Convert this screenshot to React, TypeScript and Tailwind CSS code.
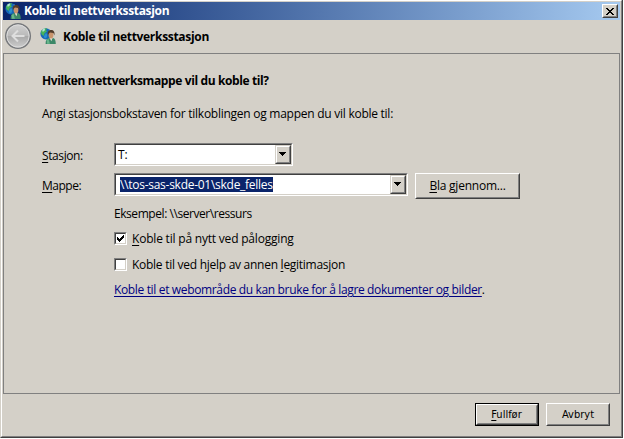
import type { ReactNode } from "react";

const sunken =
  "border border-t-[#808080] border-l-[#808080] border-r-white border-b-white";
const raised =
  "border border-t-white border-l-white border-r-[#404040] border-b-[#404040]";

function NetworkUserIcon() {
  return (
    <svg width="16" height="16" viewBox="0 0 16 16" className="block shrink-0">
      <circle cx="6" cy="5.8" r="5.6" fill="#1668b8" />
      <path d="M1 3.5C2.5 1 5 0 7 .3L6 2.2 7 3.4 4.6 5.2 3.8 8 1.4 6.3Z" fill="#46b45a" />
      <path d="M2.2 1.8C3 1 4.2.5 5.2.5L4.6 2.4 2.8 4Z" fill="#b4e4d2" />
      <path d="M5.6 5.2l2 .6-.8 3.4-2 1.6-1-2.4z" fill="#2a8ed0" />
      <path d="M8.6 1.2l2.2 1.4-1.2 1z" fill="#69c9ef" />
      <path d="M5.6 16c-.1-3.4 1.2-5.4 3.4-5.9l2.3.8 2-.8c1.7.6 2.5 2.7 2.5 5.9z" fill="#3c8868" />
      <path d="M6.8 12.3l1.6-1.8 1.5 5.3H7z" fill="#67b58b" />
      <path d="M9.6 10h2.8l-1 3.2z" fill="#e3ddd2" />
      <ellipse cx="11" cy="7" rx="2.4" ry="3.4" fill="#c9946c" />
      <path d="M7.9 7.4c-.8-3.4.6-5.4 3.2-5.4 2.5 0 4 2 3.3 5.4l-1-2.4-3.4-.6-1.3 1.3z" fill="#513b2b" />
    </svg>
  );
}

function BackButton() {
  return (
    <svg width="28" height="28" viewBox="0 0 28 28" className="block shrink-0">
      <defs>
        <linearGradient id="disc" x1="0" y1="0" x2="0" y2="1">
          <stop offset="0" stopColor="#d2d2d2" />
          <stop offset=".48" stopColor="#bababa" />
          <stop offset=".52" stopColor="#a9a9a9" />
          <stop offset="1" stopColor="#cfcfcf" />
        </linearGradient>
      </defs>
      <circle cx="14" cy="14" r="12.3" fill="url(#disc)" stroke="#77797c" strokeWidth="1.5" />
      <circle cx="14" cy="14" r="11.1" fill="none" stroke="#dcdcdc" />
      <path d="M20.5 14H9M14 8.5L8.5 14l5.5 5.5" fill="none" stroke="#dedede" strokeWidth="2" />
    </svg>
  );
}

function Combo({ className, children }: { className: string; children: ReactNode }) {
  return (
    <div className={`${sunken} h-[23px] shrink-0 ${className}`}>
      <div className="flex h-full items-stretch border border-t-[#404040] border-l-[#404040] border-r-[#d4d0c8] border-b-[#d4d0c8] bg-white">
        <div className="flex flex-1 items-center">{children}</div>
        <div className="w-4 border border-t-[#d4d0c8] border-l-[#d4d0c8] border-r-[#404040] border-b-[#404040]">
          <div className="flex h-full items-center justify-center border border-t-white border-l-white border-r-[#808080] border-b-[#808080] bg-[#d4d0c8] pr-px pb-px">
            <svg width="7" height="4" viewBox="0 0 7 4" shapeRendering="crispEdges">
              <path d="M0 0h7v1H0zM1 1h5v1H1zM2 2h3v1H2zM3 3h1v1H3z" />
            </svg>
          </div>
        </div>
      </div>
    </div>
  );
}

function PushButton({ className, children }: { className: string; children: ReactNode }) {
  return (
    <button className={`${raised} block shrink-0 ${className}`}>
      <span className="flex h-full items-center justify-center border border-t-[#d4d0c8] border-l-[#d4d0c8] border-r-[#808080] border-b-[#808080]">
        {children}
      </span>
    </button>
  );
}

function Check({ checked }: { checked?: boolean }) {
  return (
    <span className={`${sunken} block size-[13px] shrink-0`}>
      <span className="flex h-full items-center justify-center border border-t-[#404040] border-l-[#404040] border-r-[#d4d0c8] border-b-[#d4d0c8] bg-white">
        {checked && (
          <svg width="7" height="7" viewBox="0 0 7 7" shapeRendering="crispEdges">
            <path d="M0 2h1v1h1v1h1V3h1V2h1V1h1V0h1v3H6v1H5v1H4v1H3v1H2V6H1V5H0z" />
          </svg>
        )}
      </span>
    </span>
  );
}

const U = ({ children }: { children: ReactNode }) => (
  <span className="underline decoration-1 underline-offset-2">{children}</span>
);

export default function App() {
  return (
    <div className="h-[439px] w-[624px] overflow-hidden bg-white pr-px pb-px font-['Open_Sans','Noto_Sans',sans-serif] text-[12px] leading-4 whitespace-nowrap text-black">
      <div className="h-full border-r border-b border-l border-[#404040] border-l-[#d4d0c8]">
        <div className="flex h-full flex-col border border-t-white border-l-white border-r-[#808080] border-b-[#808080] bg-[#d4d0c8] pt-px pr-px pl-px">
          <div className="flex h-[18px] shrink-0 items-center bg-linear-to-r from-[#0a246a] to-[#a6caf0] pr-0.5 pl-0.5">
            <NetworkUserIcon />
            <span className="ml-[3px] font-bold tracking-[-0.34px] text-white">Koble til nettverksstasjon</span>
            <button className={`${raised} ml-auto block h-[14px] w-4 shrink-0 bg-[#d4d0c8]`}>
              <span className="flex h-full items-center justify-center border border-transparent border-r-[#808080] border-b-[#808080]">
                <svg width="8" height="7" viewBox="0 0 8 7" shapeRendering="crispEdges">
                  <path d="M0 0h2v1h1v1h2V1h1V0h2v1H7v1H6v1H5v1h1v1h1v1h1v1H6V6H5V5H3v1H2v1H0V6h1V5h1V4h1V3H2V2H1V1H0z" />
                </svg>
              </span>
            </button>
          </div>

          <div className="flex h-[33px] shrink-0 items-center pb-0.5 pl-px">
            <BackButton />
            <span className="ml-2">
              <NetworkUserIcon />
            </span>
            <span className="ml-[7px] pt-0.5 font-bold tracking-[-0.31px]">Koble til nettverksstasjon</span>
          </div>

          <main className="h-[341px] shrink-0 border border-[#808080] pl-[38px]">
            <h1 className="mt-[19px] font-bold tracking-[-0.38px]">Hvilken nettverksmappe vil du koble til?</h1>
            <p className="mt-[17px] tracking-[-0.26px]">
              Angi stasjonsbokstaven for tilkoblingen og mappen du vil koble til:
            </p>
            <div className="mt-[21px] flex h-[23px] items-center">
              <span className="w-[72px] pt-[3px] tracking-[-0.4px]"><U>S</U>tasjon:</span>
              <Combo className="w-[179px]">
                <span className="pl-0.5">T:</span>
              </Combo>
            </div>
            <div className="mt-[7px] flex h-[26px] items-start">
              <span className="w-[72px] pt-[5px] tracking-[-0.5px]"><U>M</U>appe:</span>
              <Combo className="w-[294px]">
                <span className="mb-px ml-1 h-[15px] bg-[#0a246a] leading-[15px] tracking-[-0.27px] text-white">\\tos-sas-skde-01\skde_felles</span>
              </Combo>
              <PushButton className="ml-[7px] h-[26px] w-[105px]">
                <span className="tracking-[-0.23px]"><U>B</U>la gjennom...</span>
              </PushButton>
            </div>
            <div className="pl-[72px]">
              <p className="mt-[7px] tracking-[-0.44px]">Eksempel: \\server\ressurs</p>
              <div className="mt-2 flex h-4 items-center">
                <Check checked />
                <span className="ml-[5px] pt-0.5 tracking-[-0.2px]"><U>K</U>oble til på nytt ved pålogging</span>
              </div>
              <div className="mt-[10px] flex h-4 items-center">
                <Check />
                <span className="ml-[5px] pt-0.5 tracking-[-0.27px]">Koble til ved hjelp av annen <U>l</U>egitimasjon</span>
              </div>
              <p className="mt-[10px] tracking-[-0.35px]">
                <a className="text-[#000080] underline decoration-1 underline-offset-2">Koble til et webområde du kan bruke for å lagre dokumenter og bilder</a>.
              </p>
            </div>
          </main>

          <footer className="mt-[9px] flex justify-end gap-[7px] pr-[10px] font-['DejaVu_Sans_Condensed','DejaVu_Sans',sans-serif] text-[11px]">
            <div className="h-[23px] w-16 border border-black">
              <PushButton className="h-full w-full">
                <span className="pr-px"><U>F</U>ullfør</span>
              </PushButton>
            </div>
            <PushButton className="h-[23px] w-16">
              <span>Avbryt</span>
            </PushButton>
          </footer>
        </div>
      </div>
    </div>
  );
}
